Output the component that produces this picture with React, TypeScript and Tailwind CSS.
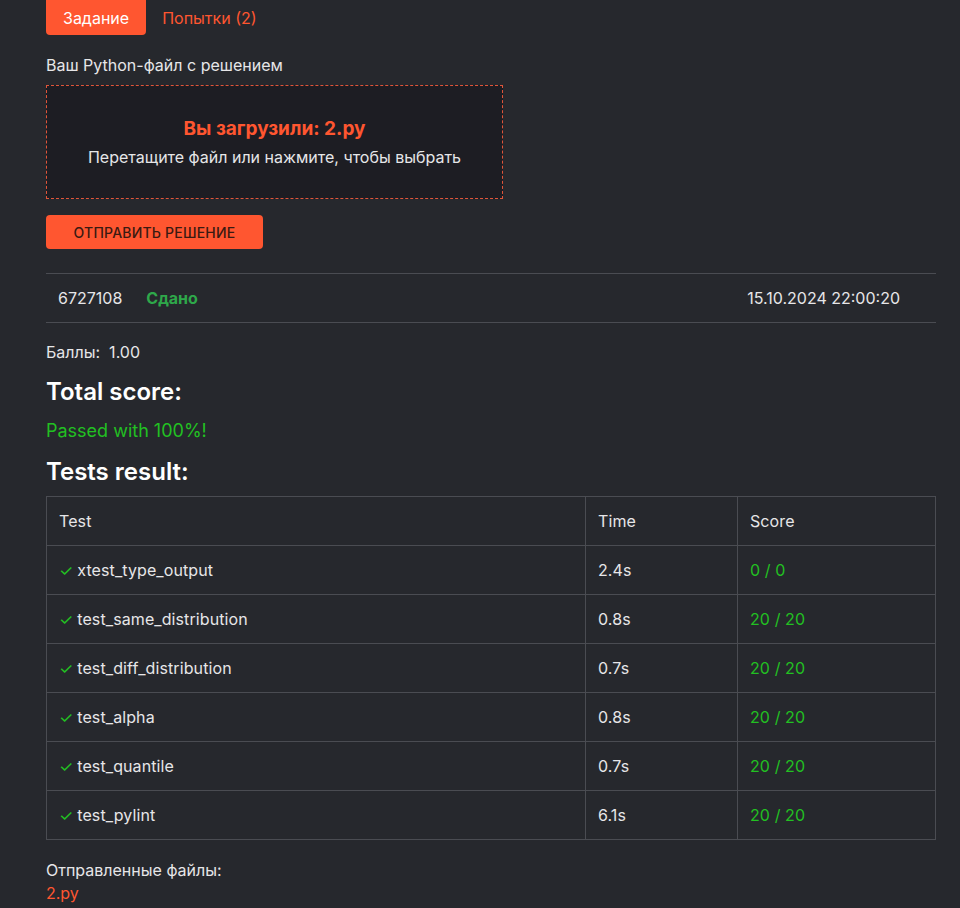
import React from 'react';

const tests = [
  { name: 'xtest_type_output', time: '2.4s', score: '0 / 0' },
  { name: 'test_same_distribution', time: '0.8s', score: '20 / 20' },
  { name: 'test_diff_distribution', time: '0.7s', score: '20 / 20' },
  { name: 'test_alpha', time: '0.8s', score: '20 / 20' },
  { name: 'test_quantile', time: '0.7s', score: '20 / 20' },
  { name: 'test_pylint', time: '6.1s', score: '20 / 20' },
];

const App = () => {
  return (
    <div
      className="min-h-screen bg-[#26282d] text-[#e6e6e8] px-[46px] pr-[24px]"
      style={{ fontFamily: 'Inter, "Noto Sans", sans-serif' }}
    >
      {/* Tabs */}
      <div className="flex items-center gap-4">
        <div className="h-[35px] px-[17px] flex items-center bg-[#ff5630] text-white text-[16px] rounded-b-[4px]">
          Задание
        </div>
        <div className="text-[#ff5630] text-[16px]">Попытки (2)</div>
      </div>

      <div className="mt-[20px] text-[16px] leading-[20px]">Ваш Python-файл с решением</div>

      {/* Drop zone */}
      <div className="mt-[10px] w-[457px] h-[114px] border border-dashed border-[#e0553a] bg-[#1d1d23] flex flex-col items-center justify-center">
        <div className="text-[#ff5630] text-[19px] font-bold leading-[24px]">Вы загрузили: 2.py</div>
        <div className="mt-[6px] text-[16px] leading-[20px] text-[#e6e6e8]">
          Перетащите файл или нажмите, чтобы выбрать
        </div>
      </div>

      <button className="mt-[16px] w-[217px] h-[34px] rounded-[4px] bg-[#ff5630] text-[#3a1a12] text-[14px] font-medium uppercase tracking-[0.2px]">
        Отправить решение
      </button>

      {/* Submission row */}
      <div className="mt-[24px] border-t border-b border-[#4a4c52] h-[50px] flex items-center px-3 text-[16px]">
        <span>6727108</span>
        <span className="ml-[24px] text-[#2ea84a] font-bold">Сдано</span>
        <span className="ml-auto mr-[24px]">15.10.2024 22:00:20</span>
      </div>

      <div className="mt-[19px] text-[16px] leading-[20px]">
        Баллы:&nbsp;&nbsp;1.00
      </div>

      <div className="mt-[14px] text-[24px] font-semibold leading-[32px] text-white">Total score:</div>
      <div className="mt-[10px] text-[18px] leading-[26px] text-[#22c022]">Passed with 100%!</div>
      <div className="mt-[12px] text-[24px] font-semibold leading-[32px] text-white">Tests result:</div>

      {/* Table */}
      <table className="mt-[8px] w-[890px] border-collapse text-[16px] tracking-[0.1px]">
        <thead>
          <tr className="h-[49px]">
            <th className="border border-[#4a4c52] text-left font-normal px-3 w-[539px]">Test</th>
            <th className="border border-[#4a4c52] text-left font-normal px-3 w-[152px]">Time</th>
            <th className="border border-[#4a4c52] text-left font-normal px-3">Score</th>
          </tr>
        </thead>
        <tbody>
          {tests.map((t) => (
            <tr key={t.name} className="h-[49px]">
              <td className="border border-[#4a4c52] px-3">
                <span className="text-[#22c022] mr-[4px]">✓</span>
                {t.name}
              </td>
              <td className="border border-[#4a4c52] px-3">{t.time}</td>
              <td className="border border-[#4a4c52] px-3 text-[#22c022]">{t.score}</td>
            </tr>
          ))}
        </tbody>
      </table>

      <div className="mt-[20px] text-[16px] leading-[20px]">Отправленные файлы:</div>
      <div className="mt-[3px] text-[16px] leading-[20px] text-[#ff5630] pb-4">2.py</div>
    </div>
  );
};

export default App;
